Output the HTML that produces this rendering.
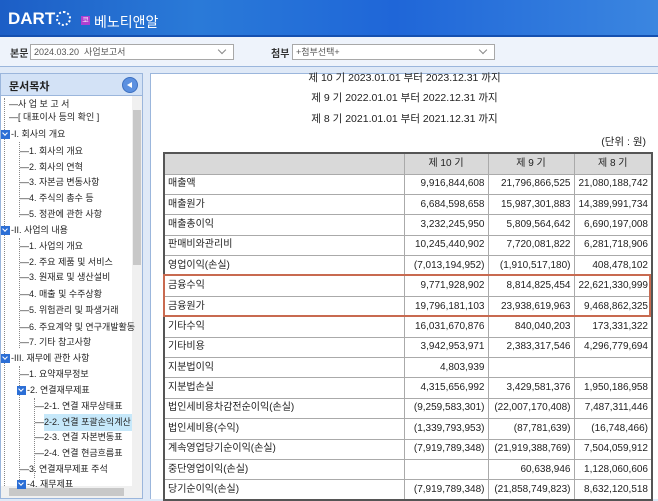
<!DOCTYPE html>
<html><head><meta charset="utf-8"><style>
*{margin:0;padding:0;box-sizing:border-box}
body{width:658px;height:499px;overflow:hidden;position:relative;background:#dfe9f7;font-family:"Liberation Sans","Noto Sans CJK KR","NanumGothic",sans-serif;color:#222}
.top{position:absolute;left:0;top:0;width:658px;height:37px;background:linear-gradient(90deg,#1c5ec6 0%,#2a7ad8 30%,#1f66d8 60%,#3b86e0 100%);border-bottom:2px solid #1550b0}
.logo{position:absolute;left:8px;top:10px;color:#fff;font-weight:bold;font-size:17px;letter-spacing:0;line-height:18px}
.logo .o{display:inline-block;width:15px;height:15px;border-radius:50%;border:2.5px dotted #fff;vertical-align:-2px;margin-left:1px}
.kb{position:absolute;left:81px;top:16px;width:9px;height:9px;background:#b040d0;color:#fff;font-size:7px;line-height:9px;text-align:center}
.cname{position:absolute;left:94px;top:12px;color:#fff;font-size:14px}
.bar{position:absolute;left:0;top:37px;width:658px;height:30px;background:#eef3fb;border-bottom:1px solid #9bb6dc}
.lbl{position:absolute;top:8px;font-size:10px;font-weight:bold;color:#333}
.sel{position:absolute;top:7px;height:16px;background:#fff;border:1px solid #a8a8a8;font-size:9px;color:#555;padding-left:3px;line-height:14px}
.sel i{position:absolute;right:8px;top:2px;width:6px;height:6px;border-right:1px solid #888;border-bottom:1px solid #888;transform:rotate(45deg)}
.left{position:absolute;left:0;top:73px;width:143px;height:426px;background:#fff;border:1px solid #9bb6dc}
.lh{position:absolute;left:0;top:0;width:141px;height:22px;background:#d3e2f6;border-bottom:1px solid #9bb6dc;font-size:11px;font-weight:bold;padding:4px 0 0 8px;color:#222}
.cb{position:absolute;right:4px;top:3px;width:16px;height:16px;border-radius:50%;background:#5b90e0;border:1px solid #3d70c0}
.cb:after{content:"";position:absolute;left:4px;top:4px;border-right:5px solid #fff;border-top:3.5px solid transparent;border-bottom:3.5px solid transparent}
.vs{position:absolute;left:131px;top:22px;width:10px;height:390px;background:#f0f0f0}
.vs b{position:absolute;left:1px;top:14px;width:8px;height:155px;background:#c8c8c8}
.hs{position:absolute;left:0;top:412px;width:141px;height:12px;background:#f0f0f0}
.hs b{position:absolute;left:8px;top:2px;width:115px;height:8px;background:#c8c8c8}
.t{position:absolute;font-size:9px;color:#222;white-space:nowrap;line-height:14px}
.chk{position:absolute;width:9px;height:9px;background:#2c6fd6}
.chk:after{content:"";position:absolute;left:2px;top:1px;width:3px;height:3px;border-right:1.3px solid #fff;border-bottom:1.3px solid #fff;transform:rotate(45deg)}
.vl{position:absolute;border-left:1px dotted #888}
.right{position:absolute;left:150px;top:73px;width:508px;height:426px;background:#fff;border-left:1px solid #9bb6dc;border-top:1px solid #9bb6dc}
.ct{position:absolute;left:0;width:100%;text-align:center;font-size:10.5px;color:#222}
table{position:absolute;left:163px;top:152px;border-collapse:collapse;font-size:10px;border:2px solid #555}
td{border:1px solid #aaa;height:20.4px;padding:0 3px;white-space:nowrap;line-height:18px}
td.n{text-align:right}
tr.h td{background:#d9d9d9;text-align:center;height:21px}
.red{position:absolute;left:163px;top:274px;width:488px;height:43px;border:2px solid #c86a50}
</style></head><body>
<div class="top"><div class="logo">DART<span class="o"></span></div><div class="kb">코</div><div class="cname">베노티앤알</div></div>
<div class="bar">
<div class="lbl" style="left:10px">본문</div>
<div class="sel" style="left:30px;width:204px">2024.03.20 &nbsp;사업보고서<i></i></div>
<div class="lbl" style="left:271px">첨부</div>
<div class="sel" style="left:292px;width:203px">+첨부선택+<i></i></div>
</div>
<div class="left">
<div class="lh">문서목차<div class="cb"></div></div>
<div class="vs"><b></b></div><div class="hs"><b></b></div>
<div class="vl" style="left:3px;top:24px;height:388px"></div>
<div class="vl" style="left:18px;top:68px;height:75px"></div>
<div class="vl" style="left:18px;top:164px;height:110px"></div>
<div class="vl" style="left:18px;top:292px;height:118px"></div>
<div class="vl" style="left:33px;top:324px;height:80px"></div>
<div class="t" style="left:8px;top:23px">—사 업 보 고 서</div>
<div class="t" style="left:8px;top:36px">—[ 대표이사 등의 확인 ]</div>
<div class="chk" style="left:0;top:56px"></div><div class="t" style="left:10px;top:53px">-I. 회사의 개요</div>
<div class="t" style="left:19px;top:70px">—1. 회사의 개요</div>
<div class="t" style="left:19px;top:86px">—2. 회사의 연혁</div>
<div class="t" style="left:19px;top:101px">—3. 자본금 변동사항</div>
<div class="t" style="left:19px;top:117px">—4. 주식의 총수 등</div>
<div class="t" style="left:19px;top:133px">—5. 정관에 관한 사항</div>
<div class="chk" style="left:0;top:152px"></div><div class="t" style="left:10px;top:149px">-II. 사업의 내용</div>
<div class="t" style="left:19px;top:165px">—1. 사업의 개요</div>
<div class="t" style="left:19px;top:181px">—2. 주요 제품 및 서비스</div>
<div class="t" style="left:19px;top:196px">—3. 원재료 및 생산설비</div>
<div class="t" style="left:19px;top:213px">—4. 매출 및 수주상황</div>
<div class="t" style="left:19px;top:229px">—5. 위험관리 및 파생거래</div>
<div class="t" style="left:19px;top:246px">—6. 주요계약 및 연구개발활동</div>
<div class="t" style="left:19px;top:261px">—7. 기타 참고사항</div>
<div class="chk" style="left:0;top:280px"></div><div class="t" style="left:10px;top:277px">-III. 재무에 관한 사항</div>
<div class="t" style="left:19px;top:293px">—1. 요약재무정보</div>
<div class="chk" style="left:16px;top:312px"></div><div class="t" style="left:26px;top:309px">-2. 연결재무제표</div>
<div class="t" style="left:34px;top:325px">—2-1. 연결 재무상태표</div>
<div style="position:absolute;left:43px;top:340px;width:88px;height:17px;background:#c6e8fa"></div>
<div class="t" style="left:34px;top:341px">—2-2. 연결 포괄손익계산</div>
<div class="t" style="left:34px;top:356px">—2-3. 연결 자본변동표</div>
<div class="t" style="left:34px;top:372px">—2-4. 연결 현금흐름표</div>
<div class="t" style="left:19px;top:388px">—3. 연결재무제표 주석</div>
<div class="chk" style="left:16px;top:406px"></div><div class="t" style="left:26px;top:403px">-4. 재무제표</div>
</div>
<div class="right">
<div class="ct" style="top:-4px">제 10 기 2023.01.01 부터 2023.12.31 까지</div>
<div class="ct" style="top:16px">제 9 기 2022.01.01 부터 2022.12.31 까지</div>
<div class="ct" style="top:37px">제 8 기 2021.01.01 부터 2021.12.31 까지</div>
<div style="position:absolute;right:12px;top:60px;font-size:10.5px">(단위 : 원)</div>
</div>
<table>
<colgroup><col style="width:240px"><col style="width:84px"><col style="width:86px"><col style="width:78px"></colgroup>
<tr class="h"><td></td><td>제 10 기</td><td>제 9 기</td><td>제 8 기</td></tr>
<tr><td>매출액</td><td class="n">9,916,844,608</td><td class="n">21,796,866,525</td><td class="n">21,080,188,742</td></tr>
<tr><td>매출원가</td><td class="n">6,684,598,658</td><td class="n">15,987,301,883</td><td class="n">14,389,991,734</td></tr>
<tr><td>매출총이익</td><td class="n">3,232,245,950</td><td class="n">5,809,564,642</td><td class="n">6,690,197,008</td></tr>
<tr><td>판매비와관리비</td><td class="n">10,245,440,902</td><td class="n">7,720,081,822</td><td class="n">6,281,718,906</td></tr>
<tr><td>영업이익(손실)</td><td class="n">(7,013,194,952)</td><td class="n">(1,910,517,180)</td><td class="n">408,478,102</td></tr>
<tr><td>금융수익</td><td class="n">9,771,928,902</td><td class="n">8,814,825,454</td><td class="n">22,621,330,999</td></tr>
<tr><td>금융원가</td><td class="n">19,796,181,103</td><td class="n">23,938,619,963</td><td class="n">9,468,862,325</td></tr>
<tr><td>기타수익</td><td class="n">16,031,670,876</td><td class="n">840,040,203</td><td class="n">173,331,322</td></tr>
<tr><td>기타비용</td><td class="n">3,942,953,971</td><td class="n">2,383,317,546</td><td class="n">4,296,779,694</td></tr>
<tr><td>지분법이익</td><td class="n">4,803,939</td><td class="n"></td><td class="n"></td></tr>
<tr><td>지분법손실</td><td class="n">4,315,656,992</td><td class="n">3,429,581,376</td><td class="n">1,950,186,958</td></tr>
<tr><td>법인세비용차감전순이익(손실)</td><td class="n">(9,259,583,301)</td><td class="n">(22,007,170,408)</td><td class="n">7,487,311,446</td></tr>
<tr><td>법인세비용(수익)</td><td class="n">(1,339,793,953)</td><td class="n">(87,781,639)</td><td class="n">(16,748,466)</td></tr>
<tr><td>계속영업당기순이익(손실)</td><td class="n">(7,919,789,348)</td><td class="n">(21,919,388,769)</td><td class="n">7,504,059,912</td></tr>
<tr><td>중단영업이익(손실)</td><td class="n"></td><td class="n">60,638,946</td><td class="n">1,128,060,606</td></tr>
<tr><td>당기순이익(손실)</td><td class="n">(7,919,789,348)</td><td class="n">(21,858,749,823)</td><td class="n">8,632,120,518</td></tr>
</table>
<div class="red"></div>
</body></html>
